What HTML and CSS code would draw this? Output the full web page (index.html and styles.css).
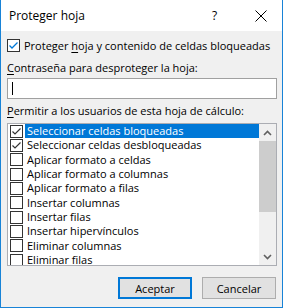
FILE: index.html
```html
<!DOCTYPE html>
<html lang="es">

<head>
  <meta charset="UTF-8">
  <title>Proteger hoja</title>
  <link rel="stylesheet" href="styles.css">
</head>

<body>
  <div class="dialog">
    <div class="titlebar">
      <span class="title">Proteger hoja</span>
      <span class="help">?</span>
      <span class="close">
        <svg width="12" height="12" viewBox="0 0 12 12">
          <path d="M0.5 0.5 L11.5 11.5 M11.5 0.5 L0.5 11.5" stroke="#000" stroke-width="1" fill="none" />
        </svg>
      </span>
    </div>

    <div class="content">
      <div class="check-row">
        <span class="box">
          <svg width="11" height="11" viewBox="0 0 11 11">
            <path d="M1.5 5.5 L4 8 L9.5 2.5" stroke="#0078d7" stroke-width="1.3" fill="none" />
          </svg>
        </span>
        <span class="check-text">Proteger <u>h</u>oja y contenido de celdas bloqueadas</span>
      </div>

      <div class="field-label pass-label"><u>C</u>ontraseña para desproteger la hoja:</div>
      <div class="textbox"><span class="caret"></span></div>

      <div class="field-label allow-label"><u>P</u>ermitir a los usuarios de esta hoja de cálculo:</div>

      <div class="listbox">
        <ul class="items">
          <li class="item selected">
            <span class="box"><svg width="11" height="11" viewBox="0 0 11 11"><path d="M1.5 5.5 L4 8 L9.5 2.5" stroke="#333" stroke-width="1.2" fill="none" /></svg></span>
            <span class="item-text">Seleccionar celdas bloqueadas</span>
          </li>
          <li class="item">
            <span class="box"><svg width="11" height="11" viewBox="0 0 11 11"><path d="M1.5 5.5 L4 8 L9.5 2.5" stroke="#333" stroke-width="1.2" fill="none" /></svg></span>
            <span class="item-text">Seleccionar celdas desbloqueadas</span>
          </li>
          <li class="item"><span class="box"></span><span class="item-text">Aplicar formato a celdas</span></li>
          <li class="item"><span class="box"></span><span class="item-text">Aplicar formato a columnas</span></li>
          <li class="item"><span class="box"></span><span class="item-text">Aplicar formato a filas</span></li>
          <li class="item"><span class="box"></span><span class="item-text">Insertar columnas</span></li>
          <li class="item"><span class="box"></span><span class="item-text">Insertar filas</span></li>
          <li class="item"><span class="box"></span><span class="item-text">Insertar hipervínculos</span></li>
          <li class="item"><span class="box"></span><span class="item-text">Eliminar columnas</span></li>
          <li class="item"><span class="box"></span><span class="item-text">Eliminar filas</span></li>
        </ul>
        <div class="scrollbar">
          <span class="arrow">
            <svg width="9" height="6" viewBox="0 0 9 6"><path d="M1 5 L4.5 1.5 L8 5" stroke="#606060" stroke-width="1.6" fill="none" /></svg>
          </span>
          <span class="thumb"></span>
          <span class="track"></span>
          <span class="arrow">
            <svg width="9" height="6" viewBox="0 0 9 6"><path d="M1 1 L4.5 4.5 L8 1" stroke="#606060" stroke-width="1.6" fill="none" /></svg>
          </span>
        </div>
      </div>

      <div class="buttons">
        <button class="btn default">Aceptar</button>
        <button class="btn">Cancelar</button>
      </div>
    </div>
  </div>
</body>

</html>
```

FILE: styles.css
```css
* {
  box-sizing: border-box;
}

html,
body {
  margin: 0;
  padding: 0;
}

body {
  font-family: "Open Sans", "Liberation Sans", sans-serif;
  font-size: 11px;
  color: #000;
  background-color: #f0f0f0;
}

ul {
  padding: 0;
  margin: 0;
  list-style: none;
}

u {
  text-decoration-thickness: 1px;
  text-underline-offset: 2px;
}

.dialog {
  display: flex;
  flex-direction: column;
  width: 283px;
  height: 308px;
  border: 1px solid #1883d7;
  border-top: none;
  background-color: #f0f0f0;
}

/* barra de título */
.titlebar {
  display: flex;
  align-items: center;
  height: 31px;
  background-color: #fff;
}

.titlebar .title {
  flex: 1;
  padding-left: 8px;
  font-size: 12px;
  line-height: 16px;
}

.titlebar .help {
  width: 43px;
  font-size: 12px;
  line-height: 16px;
}

.titlebar .close {
  display: flex;
  width: 27px;
  padding-top: 1px;
}

.content {
  display: flex;
  flex-direction: column;
  flex: 1;
  padding: 0 5px 0 6px;
}

/* casillas */
.box {
  display: flex;
  align-items: center;
  justify-content: center;
  flex: none;
  width: 13px;
  height: 13px;
  border: 1px solid #333;
  background-color: #fff;
}

.check-row {
  display: flex;
  align-items: center;
  height: 13px;
  margin-top: 8px;
}

.check-row .check-text {
  margin-left: 4px;
  line-height: 16px;
}

.field-label {
  line-height: 16px;
}

.pass-label {
  margin-top: 8px;
}

.textbox {
  display: flex;
  align-items: center;
  height: 21px;
  margin-top: 2px;
  padding-left: 4px;
  border: 1px solid #a0a0a0;
  background-color: #fff;
}

.textbox .caret {
  width: 1px;
  height: 13px;
  background-color: #000;
}

.allow-label {
  margin-top: 4px;
}

/* lista con casillas */
.listbox {
  display: flex;
  height: 143px;
  margin-top: 4px;
  border: 1px solid #abadb3;
  background-color: #fff;
  overflow: hidden;
}

.items {
  flex: 1;
}

.item {
  display: flex;
  align-items: center;
  height: 14.33px;
  padding-left: 2px;
}

.item .box {
  border-color: #333;
}

.item-text {
  flex: 1;
  margin-left: 2px;
  padding-left: 2px;
  line-height: 14px;
}

.item.selected .item-text {
  color: #fff;
  background-color: #0078d7;
}

.scrollbar {
  display: flex;
  flex-direction: column;
  width: 17px;
  background-color: #f0f0f0;
}

.scrollbar .arrow {
  display: flex;
  align-items: center;
  justify-content: center;
  height: 17px;
}

.scrollbar .thumb {
  height: 71px;
  background-color: #cdcdcd;
}

.scrollbar .track {
  flex: 1;
}

/* botones */
.buttons {
  display: flex;
  justify-content: flex-end;
  gap: 10px;
  margin-top: 11px;
  padding-right: 1px;
}

.btn {
  width: 74px;
  height: 22px;
  padding: 0;
  font-family: inherit;
  font-size: 11px;
  color: #000;
  border: 1px solid #adadad;
  background-color: #e1e1e1;
}

.btn.default {
  border: 2px solid #0078d7;
}
```
